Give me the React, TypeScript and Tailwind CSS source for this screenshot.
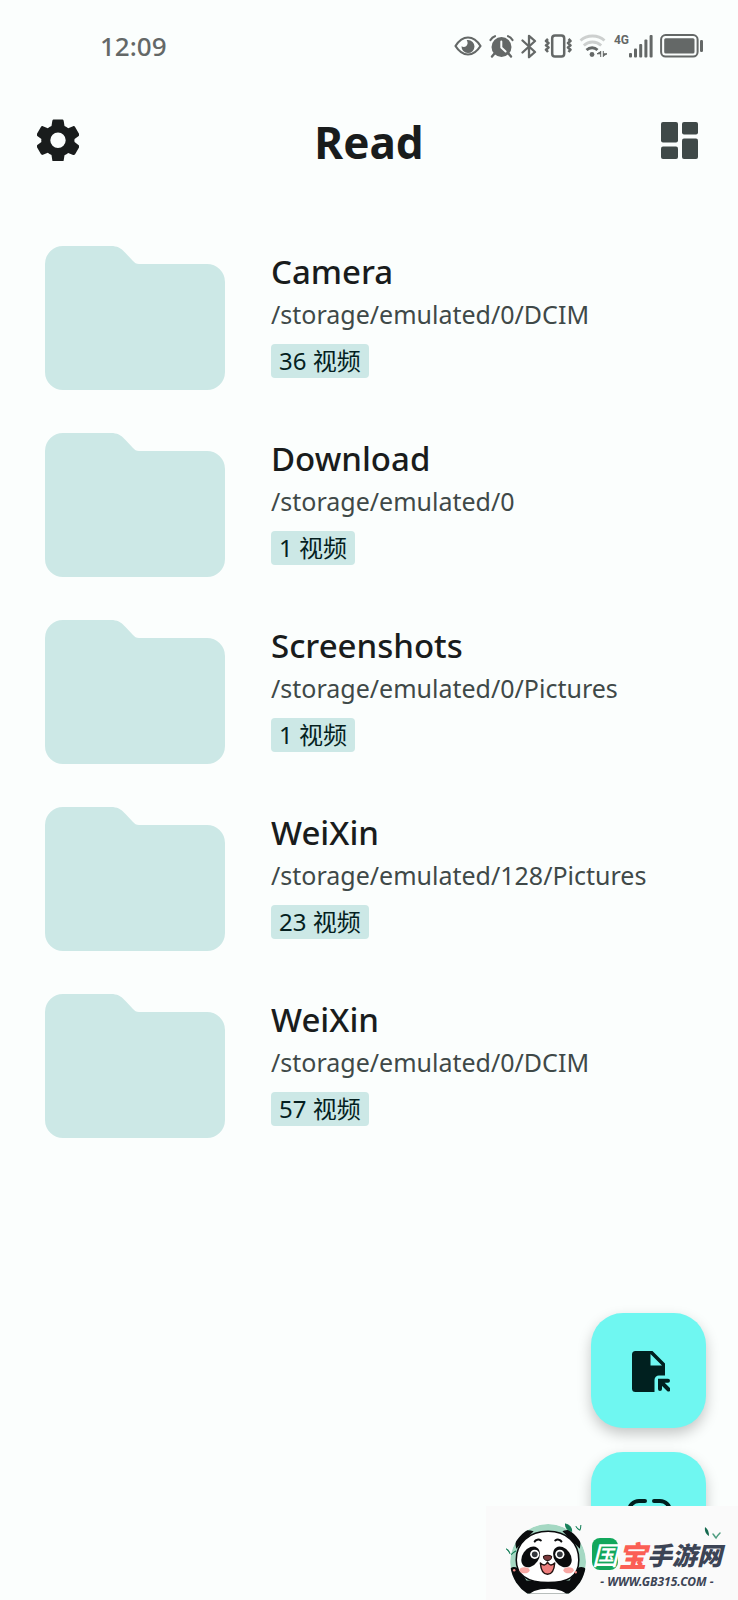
import type { ReactNode } from 'react';

interface Folder {
  id: number;
  name: string;
  path: string;
  count: number;
}

const folders: Folder[] = [
  { id: 1, name: 'Camera', path: '/storage/emulated/0/DCIM', count: 36 },
  { id: 2, name: 'Download', path: '/storage/emulated/0', count: 1 },
  { id: 3, name: 'Screenshots', path: '/storage/emulated/0/Pictures', count: 1 },
  { id: 4, name: 'WeiXin', path: '/storage/emulated/128/Pictures', count: 23 },
  { id: 5, name: 'WeiXin', path: '/storage/emulated/0/DCIM', count: 57 },
];

function EyeIcon() {
  return (
    <svg width="28" height="20" viewBox="0 0 28 20" fill="none" aria-hidden="true">
      <path d="M1.500 10C5 4.400 9 1.500 14 1.500S23 4.400 26.500 10C23 15.600 19 18.500 14 18.500S5 15.600 1.500 10Z" stroke="currentColor" strokeWidth="2.200" strokeLinejoin="round" />
      <path d="M14 4a6.500 6.500 0 1 1-6.500 6.300c1.500 1 3.600.9 4.900-.4 1.600-1.600 1.600-4 .3-5.700.4-.1.900-.2 1.300-.2Z" fill="currentColor" />
    </svg>
  );
}

function AlarmIcon() {
  return (
    <svg width="25" height="23" viewBox="0 0 25 23" fill="none" aria-hidden="true">
      <circle cx="12.500" cy="12" r="10" fill="currentColor" />
      <path d="M1.500 5C2.500 3.300 4 1.800 6 1.200M23.500 5C22.500 3.300 21 1.800 19 1.200" stroke="currentColor" strokeWidth="2.200" strokeLinecap="round" />
      <path d="M5.500 18.500 3 21.500M19.500 18.500l2.500 3" stroke="currentColor" strokeWidth="2.400" strokeLinecap="round" />
      <path d="M12.300 6.500V12.500l4.300 4" stroke="#fbfefd" strokeWidth="2" strokeLinecap="round" strokeLinejoin="round" />
    </svg>
  );
}

function BluetoothIcon() {
  return (
    <svg width="16" height="25" viewBox="0 0 16 25" fill="none" aria-hidden="true">
      <path d="M1.500 6.500 14 18 8 23.200V1.800L14 7 1.500 18.500" stroke="currentColor" strokeWidth="2.300" strokeLinecap="round" strokeLinejoin="round" />
    </svg>
  );
}

function VibrateIcon() {
  return (
    <svg width="28" height="24" viewBox="0 0 28 24" fill="none" aria-hidden="true">
      <rect x="8.200" y="1.500" width="12" height="21" rx="2.800" stroke="currentColor" strokeWidth="2.500" />
      <path d="M4 5 2 7l2.500 2L2 11.300l2.500 2.200L2 15.700l2 2.300M24.500 5l2 2-2.500 2 2.500 2.300-2.500 2.200 2.500 2.200-2 2.300" stroke="currentColor" strokeWidth="2.500" strokeLinejoin="round" />
    </svg>
  );
}

function WifiIcon() {
  return (
    <svg width="28" height="24" viewBox="0 0 28 24" fill="none" aria-hidden="true">
      <path d="M1.500 6.500c6.500-6 17.500-6 24 0" stroke="#cdd0cf" strokeWidth="2.800" />
      <path d="M4.800 11.500c5-4.700 12.400-4.700 17.400 0" stroke="#cdd0cf" strokeWidth="2.800" />
      <path d="M7.500 16c3.300-3 8-3 11 0" stroke="currentColor" strokeWidth="2.800" />
      <circle cx="13" cy="20.500" r="2.400" fill="currentColor" />
      <path d="M21.700 17v6M18 19.800l3.500-2v2ZM24.300 17v6M28 19.800l-3.500 2v-2Z" fill="currentColor" stroke="currentColor" />
    </svg>
  );
}

function SignalIcon() {
  return (
    <svg width="24" height="24" viewBox="0 0 24 24" fill="currentColor" aria-hidden="true">
      <rect x="0" y="19" width="3" height="4.500" rx="1" />
      <rect x="5" y="14.500" width="3" height="9" rx="1" />
      <rect x="10.200" y="10" width="3" height="13.500" rx="1" />
      <rect x="15.400" y="5.500" width="3" height="18" rx="1" />
      <rect x="20.600" y="1" width="3" height="22.500" rx="1" />
    </svg>
  );
}

function BatteryIcon() {
  return (
    <svg width="44" height="24" viewBox="0 0 44 24" fill="none" aria-hidden="true">
      <rect x="1.100" y="1.100" width="36.500" height="21.500" rx="4.500" stroke="currentColor" strokeWidth="2" />
      <rect x="4.200" y="4.200" width="30.300" height="15.300" rx="1.500" fill="currentColor" />
      <rect x="40" y="6" width="3" height="12" rx="1.200" fill="currentColor" />
    </svg>
  );
}

function GearIcon() {
  return (
    <svg width="42" height="42" viewBox="0 0 42 42" fill="currentColor" aria-hidden="true">
      <path d="M17 .5h8c.9 0 1.500.5 1.700 1.400L27.500 7c1.400.6 2.600 1.300 3.700 2.200l4.900-2c.8-.3 1.600 0 2 .7l4 6.900c.4.8.2 1.600-.4 2.100l-4.100 3.200c-.2.500-.2 1.300-.2 1.900l.2 1.100 4.100 3.200c.6.500.8 1.300.4 2.100l-4 6.900c-.4.700-1.200 1-2 .7l-4.900-2c-1.100.9-2.300 1.600-3.700 2.200l-.8 5.100c-.2.900-.8 1.400-1.700 1.400h-8c-.9 0-1.500-.5-1.700-1.400L14.500 36c-1.400-.6-2.600-1.300-3.700-2.200l-4.900 2c-.8.300-1.600 0-2-.7l-4-6.900c-.4-.8-.2-1.600.4-2.100l4.100-3.200c-.2-1-.2-2 0-3L.3 16.900c-.6-.5-.8-1.300-.4-2.100l4-6.900c.4-.7 1.200-1 2-.7l4.900 2C11.900 8.300 13.100 7.600 14.500 7l.8-5.100C15.500 1 16.100.5 17 .5ZM21 13.600a7.700 7.700 0 1 0 0 15.400 7.700 7.700 0 0 0 0-15.400Z" fillRule="evenodd" />
    </svg>
  );
}

function DashboardIcon() {
  return (
    <svg width="37" height="37" viewBox="0 0 37 37" fill="currentColor" aria-hidden="true">
      <rect x="0" y="0" width="17" height="20.500" rx="2" />
      <rect x="21" y="0" width="16" height="12.500" rx="2" />
      <rect x="0" y="24.500" width="17" height="12.500" rx="2" />
      <rect x="21" y="16.500" width="16" height="20.500" rx="2" />
    </svg>
  );
}

function FolderIcon() {
  return (
    <svg className="w-45 shrink-0" viewBox="0 0 180 144" fill="#cce8e6" aria-hidden="true">
      <path d="M18 0H66C72 0 76 2 80 6.500L88 15C90 17 91 18 94 18H162A18 18 0 0 1 180 36V126A18 18 0 0 1 162 144H18A18 18 0 0 1 0 126V18A18 18 0 0 1 18 0Z" />
    </svg>
  );
}

function OpenFileIcon() {
  return (
    <svg width="42" height="44" viewBox="-2 0 42 44" fill="none" aria-hidden="true">
      <path d="M5.500 2H22.500L35 14.500V26.500H29A4.500 4.500 0 0 0 24.500 31V43H5.500A3.500 3.500 0 0 1 2 39.500V5.500A3.500 3.500 0 0 1 5.500 2ZM20.500 5V16.500H32Z" fill="currentColor" fillRule="evenodd" />
      <path d="M38 31.800H30V40M30.500 32.500l8 8" stroke="currentColor" strokeWidth="4" strokeLinecap="round" />
    </svg>
  );
}

function LinkIcon() {
  return (
    <svg width="48" height="48" viewBox="0 0 48 48" fill="none" aria-hidden="true">
      <path d="M20 15h-6a10 10 0 0 0 0 20h6M29 15h6a10 10 0 0 1 0 20h-6M16 25h16" stroke="currentColor" strokeWidth="4" strokeLinecap="round" />
    </svg>
  );
}

function PandaLogo() {
  return (
    <svg width="80" height="78" viewBox="0 0 78 76" fill="none" aria-hidden="true">
      <defs>
        <clipPath id="panda-badge">
          <path d="M21 70A37 37 0 1 1 61 70Z" />
        </clipPath>
      </defs>
      <g clipPath="url(#panda-badge)">
        <circle cx="41" cy="39" r="37" fill="#a5d8c3" />
        <path d="M10 26C7 14 14 5 27 9ZM55 9c12-5 20 3 17 17Z" fill="#0a0b0d" />
        <path d="M2 76V50c0-6 8-9 12-2l6 9h42l5-9c4-7 13-4 12 2v26Z" fill="#0a0b0d" />
        <ellipse cx="41" cy="73" rx="19" ry="8" fill="#fff" />
        <path d="M41 9C59 9 71 20 71 37S59 59 41 59 10 54 10 37 23 9 41 9Z" fill="#fff" stroke="#0a0b0d" strokeWidth="1.500" />
      </g>
      <ellipse cx="24" cy="34" rx="8" ry="11" transform="rotate(35 24 34)" fill="#0a0b0d" />
      <ellipse cx="55" cy="34" rx="8" ry="11" transform="rotate(-35 55 34)" fill="#0a0b0d" />
      <circle cx="28" cy="31.500" r="4.500" fill="#fff" />
      <circle cx="52.500" cy="31.500" r="4.500" fill="#fff" />
      <circle cx="28" cy="31.500" r="2.800" fill="#33363b" />
      <circle cx="52.500" cy="31.500" r="2.800" fill="#33363b" />
      <path d="M28 19c1-2 4-2.500 6-1M48 18c2-1.500 5-1 6 1" stroke="#0a0b0d" strokeWidth="2" strokeLinecap="round" />
      <ellipse cx="18" cy="47" rx="5" ry="3" fill="#f9a8a4" />
      <ellipse cx="61" cy="47" rx="5" ry="3" fill="#f9a8a4" />
      <path d="M33.500 40c3 3 6 2 7-1 1 3 4 4 7 1-.5 7-3 11-7 11s-6.500-4-7-11Z" fill="#ee7d7c" stroke="#22110f" strokeWidth="1.400" strokeLinejoin="round" />
      <path d="M36.500 33.500c2-1.500 6-1.500 8 0 0 2.500-2 4-4 4s-4-1.500-4-4Z" fill="#7a3a3c" stroke="#22110f" />
      <path d="M58 2c4 1 6 4 6 7-4-1-6-3-6-7ZM68 4c1 2 2 3 4 4M73 3c0 2-.5 4-1 5M4 31c-1-3-2-4-4-5M5 32c1-2 3-3 5-4" fill="#17805a" stroke="#17805a" />
      <circle cx="8" cy="47" r="1.200" fill="#f08a85" />
      <circle cx="68" cy="49" r="1.200" fill="#f08a85" />
    </svg>
  );
}

function LeafSprig() {
  return (
    <svg width="18" height="14" viewBox="0 0 18 14" fill="none" aria-hidden="true">
      <path d="M1 1c3 2 4 5 4 9C1.500 8 .5 5 1 1Z" fill="#15694f" />
      <path d="M9 8c1 1 2 3 3 4 1-2 2-3 4-5" stroke="#4f9d80" strokeWidth="1.500" strokeLinecap="round" />
    </svg>
  );
}

function StatusBar() {
  return (
    <div className="flex h-23 items-center justify-between pr-[34px] pl-25 text-[#646867]">
      <span className="font-['Noto_Sans'] text-[26px] leading-8 font-medium">12:09</span>
      <div className="flex items-center gap-[7px]">
        <EyeIcon />
        <AlarmIcon />
        <BluetoothIcon />
        <VibrateIcon />
        <WifiIcon />
        <div className="flex">
          <span className="font-['Roboto'] text-[12px] leading-3 font-bold">4G</span>
          <SignalIcon />
        </div>
        <BatteryIcon />
      </div>
    </div>
  );
}

function FolderRow({ folder }: { folder: Folder }) {
  return (
    <li className="flex items-start gap-[46px]">
      <FolderIcon />
      <div className="min-w-0 pt-1">
        <h2 className="truncate text-[33px] leading-11 font-medium text-[#191c1c]">{folder.name}</h2>
        <p className="truncate text-[25px] leading-10 text-[#3f4948]">{folder.path}</p>
        <p className="mt-2.5 w-fit rounded-sm bg-[#cce8e6] px-2 text-[24px] leading-[34px] text-[#051f1f]">
          {folder.count} 视频
        </p>
      </div>
    </li>
  );
}

function Fab({ label, children }: { label: string; children: ReactNode }) {
  return (
    <button
      type="button"
      aria-label={label}
      className="flex size-[115px] items-center justify-center rounded-[32px] bg-[#6ff7f1] text-[#00201f] shadow-[0_6px_14px_rgba(0,0,0,0.22)]"
    >
      {children}
    </button>
  );
}

function SiteBadge() {
  return (
    <div className="absolute right-0 bottom-0 flex h-[94px] items-end bg-[#fafafa] pr-4 pl-5 font-['Noto_Sans_CJK_SC',sans-serif]">
      <PandaLogo />
      <div className="flex flex-col items-center pb-2 pl-1.5">
        <div className="flex items-center italic">
          <span className="rounded-lg bg-[#12a75c] text-[26px] leading-8 font-medium text-white">国</span>
          <span className="text-[29px] leading-9 font-black text-[#fb5f55]">宝</span>
          <span className="text-[25px] leading-9 font-black text-[#3c4455]">手游网</span>
        </div>
        <a href="#" className="font-['Noto_Sans'] text-[12px] leading-5 font-bold text-[#3c4455] italic">
          - WWW.GB315.COM -
        </a>
      </div>
      <div className="absolute top-5 right-4">
        <LeafSprig />
      </div>
    </div>
  );
}

export default function App() {
  return (
    <div className="relative min-h-screen overflow-hidden bg-[#fbfefd] font-['Noto_Sans','Noto_Sans_CJK_SC',sans-serif]">
      <StatusBar />
      <header className="flex h-24 items-center justify-between px-9">
        <button type="button" aria-label="Settings" className="flex size-11 items-center justify-center text-[#191c1c]">
          <GearIcon />
        </button>
        <h1 className="pt-1 text-[44px] leading-14 font-bold text-[#191c1c]">Read</h1>
        <button type="button" aria-label="Layout" className="flex size-11 items-center justify-center text-[#3f4948]">
          <DashboardIcon />
        </button>
      </header>
      <main className="px-[45px] pt-[58px]">
        <ul className="flex flex-col gap-[43px]">
          {folders.map((folder) => (
            <FolderRow key={folder.id} folder={folder} />
          ))}
        </ul>
      </main>
      <div className="absolute right-8 bottom-[33px] flex flex-col gap-6">
        <Fab label="Open file">
          <OpenFileIcon />
        </Fab>
        <Fab label="Open link">
          <LinkIcon />
        </Fab>
      </div>
      <SiteBadge />
    </div>
  );
}
